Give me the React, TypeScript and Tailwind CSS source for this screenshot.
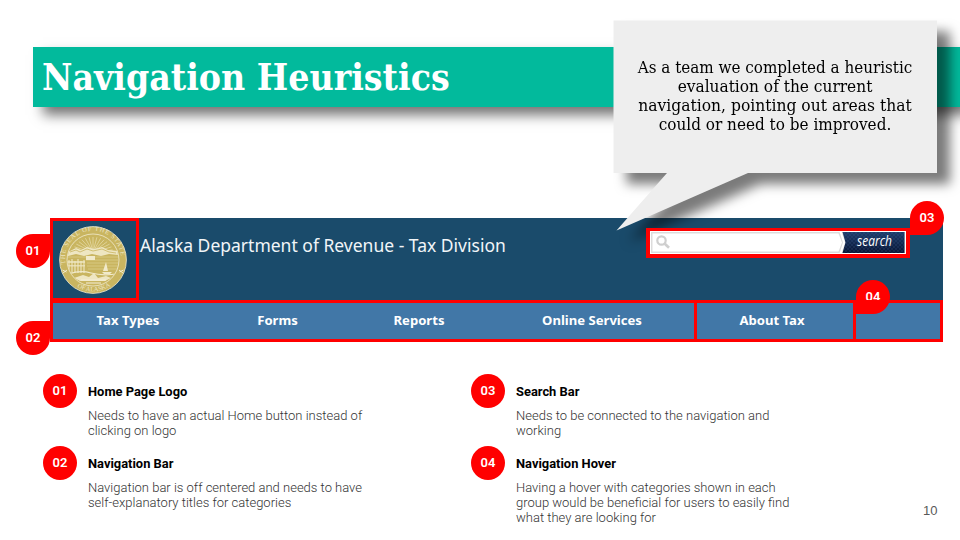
import React from "react";

const navLinks = [
  { label: "Tax Types", box: "ml-[42px] w-[66px]" },
  { label: "Forms", box: "ml-[95px] w-[43px]" },
  { label: "Reports", box: "ml-[93px] w-[54px]" },
  { label: "Online Services", box: "ml-[93px] w-[106px]" },
];

const leftFindings = [
  { num: "01", title: "Home Page Logo", lines: ["Needs to have an actual Home button instead of", "clicking on logo"] },
  { num: "02", title: "Navigation Bar", lines: ["Navigation bar is off centered and needs to have", "self-explanatory titles for categories"] },
];

const rightFindings = [
  { num: "03", title: "Search Bar", lines: ["Needs to be connected to the navigation and", "working"] },
  {
    num: "04",
    title: "Navigation Hover",
    lines: ["Having a hover with categories shown in each", "group would be beneficial for users to easily find", "what they are looking for"],
  },
];

const calloutLines = [
  { text: "As a team we completed a heuristic", stretch: "scale-x-[1.055]" },
  { text: "evaluation of the current", stretch: "scale-x-[1.07]" },
  { text: "navigation, pointing out areas that", stretch: "scale-x-[1.08]" },
  { text: "could or need to be improved.", stretch: "scale-x-[1.06]" },
];

function Pin({ num, className }: { num: string; className: string }) {
  return (
    <div
      className={`flex h-[34px] w-[34px] items-center justify-center bg-[#ff0000] font-['Roboto',sans-serif] text-[13px] font-semibold text-white ${className}`}
    >
      {num}
    </div>
  );
}

function Seal() {
  const rays = Array.from({ length: 15 }, (_, i) => {
    const a = (Math.PI * (i + 1)) / 16;
    return `M${34 - Math.cos(a) * 4} ${27 - Math.sin(a) * 4}L${34 - Math.cos(a) * 20} ${27 - Math.sin(a) * 16}`;
  }).join("");
  return (
    <svg viewBox="0 0 68 68" className="-ml-[3px] h-[68px] w-[68px]">
      <defs>
        <path id="sealTop" d="M6.5 38A28 28 0 1 1 61.5 38" />
        <path id="sealBottom" d="M14 58A31 31 0 0 0 54 58" />
        <clipPath id="sealInner">
          <circle cx="34" cy="34" r="25.5" />
        </clipPath>
      </defs>
      <circle cx="34" cy="34" r="33.4" fill="#c9b560" stroke="#f1ebcf" strokeWidth="0.8" />
      <g clipPath="url(#sealInner)">
        <path d={rays} stroke="#e9dfb0" strokeWidth="0.7" />
        <path d="M9 26l8-4 5 2 6-3 7 2 8-2 6 3 10 1v4l-9-1-8 2-9-2-8 2-8-2-8 2z" fill="#eee6c2" />
        <path d="M11 26l6-2 4 2 7-3 6 2 9-2 7 3 7 1" stroke="#c9b560" strokeWidth="0.8" fill="none" />
        <path d="M9 31h50M27 34h32M28 37h31M28 40h31M29 43h29" stroke="#ddd08f" strokeWidth="0.7" />
        <rect x="27" y="30" width="9" height="4" fill="#f1eacb" />
        <path d="M8 35h18v2H8zM9 39h17v1.5H9z" fill="#e5dba9" />
        <path d="M10 34v13M13 33v14M16 35v12M19 33v14M22 35v12M25 34v13" stroke="#eee6c2" strokeWidth="1.1" />
        <path d="M47 36l-3 9h5zM43 46h10l-2 2h-6z" fill="#f1eacb" />
        <path d="M10 48q11-4 22-1t26 1" stroke="#f1eacb" strokeWidth="1.2" fill="none" />
        <path d="M15 52l9-3 6 2 5-4 4 5 8-2 5 2-6 3H21z" fill="#eee6c2" />
        <path d="M22 54h25M27 57h15" stroke="#f5efd7" strokeWidth="1.2" />
      </g>
      <circle cx="34" cy="34" r="26" fill="none" stroke="#f1ebcf" strokeWidth="0.8" />
      <text fill="#eee6c4" className="font-['Liberation_Serif',serif] text-[6.5px]">
        <textPath href="#sealTop" textLength="90">
          THE SEAL OF THE STATE
        </textPath>
      </text>
      <text fill="#eee6c4" className="font-['Liberation_Serif',serif] text-[6.5px]">
        <textPath href="#sealBottom" startOffset="5" textLength="35">
          OF ALASKA
        </textPath>
      </text>
      <path d="M3.5 44l4 2M64.5 44l-4 2M4 47l4-3M64 47l-4-3" stroke="#f1ebcf" strokeWidth="1" />
    </svg>
  );
}

function SearchBox() {
  return (
    <div className="relative z-10 mt-[10px] flex h-[30px] w-[264px] border-4 border-t-[3px] border-[#ff0000] bg-white">
      <svg viewBox="0 0 256 23" className="h-[23px] w-[256px]">
        <defs>
          <linearGradient id="searchButton" x1="0" y1="0" x2="0" y2="1">
            <stop offset="0" stopColor="#1f3d6c" />
            <stop offset="1" stopColor="#081636" />
          </linearGradient>
          <pattern id="weave" width="4" height="4" patternUnits="userSpaceOnUse">
            <path d="M0 4l4-4M0 0l4 4" stroke="#4a6798" strokeWidth="0.5" opacity="0.35" />
          </pattern>
        </defs>
        <rect width="256" height="23" fill="#dcdcdc" />
        <path d="M2.500 2.500H188.500L192 11.500L188.500 20.500H2.500z" fill="#fff" />
        <path d="M192.500 1h62v21h-62l3-10.500z" fill="url(#searchButton)" />
        <path d="M192.500 1h62v21h-62l3-10.500z" fill="url(#weave)" />
        <path d="M190.500 .5l3.500 11-3.500 11" stroke="#fff" strokeWidth="2" fill="none" />
        <circle cx="11.500" cy="9.500" r="4.200" fill="none" stroke="#cfcfcf" strokeWidth="2.200" />
        <path d="M14.500 12.500l4.500 4.200" stroke="#cfcfcf" strokeWidth="2.700" />
        <path d="M0 .5h256M255.500 0v23M0 22.500h256M.5 0v23" stroke="#fff" />
        <text x="207" y="15" fill="#fff" textLength="35" lengthAdjust="spacingAndGlyphs" className="font-['Open_Sans',sans-serif] text-[14px] font-medium italic">
          search
        </text>
      </svg>
    </div>
  );
}

function Finding({ num, title, lines }: { num: string; title: string; lines: string[] }) {
  return (
    <article className="flex h-[72px] gap-[11px]">
      <Pin num={num} className="shrink-0 rounded-full" />
      <div className="whitespace-nowrap font-['Roboto',sans-serif]">
        <h2 className="mt-[10px] text-[12.9px] leading-[16px] font-bold text-black">{title}</h2>
        <p className="mt-[8px] text-[13px] leading-[15px] font-light text-[#333]">
          {lines.map((line) => (
            <span key={line} className="block">{line}</span>
          ))}
        </p>
      </div>
    </article>
  );
}

export default function App() {
  return (
    <main className="relative flex h-[540px] w-[960px] flex-col overflow-hidden bg-white">
      <header className="mt-[47px] ml-[33px] flex h-[60px] shrink-0 items-center bg-[#02ba9c] pl-[9px] shadow-[10px_8px_12px_rgba(0,0,0,0.55)]">
        <h1 className="whitespace-nowrap font-['DejaVu_Serif_Condensed','DejaVu_Serif',serif] text-[37px] leading-none font-bold text-white">
          Navigation Heuristics
        </h1>
      </header>

      <section className="mt-[111px] ml-[50px] flex h-[124px] w-[893px] shrink-0 flex-col bg-[#1a4b6b]">
        <div className="flex h-[82px]">
          <div className="flex h-[83px] w-[89px] shrink-0 justify-center border-3 border-[#ff0000] pt-[5px]">
            <Seal />
          </div>
          <p className="mt-[14px] ml-[1px] w-[456px] whitespace-nowrap font-['Noto_Sans',sans-serif] text-[17.500px] leading-[26px] text-[#f1f5f8]">
            Alaska Department of Revenue - Tax Division
          </p>
          <div className="ml-[50px]">
            <SearchBox />
          </div>
        </div>
        <nav className="flex h-[42px] border-3 border-[#ff0000] bg-[#4177a7] font-['Noto_Sans',sans-serif] text-[13.1px] leading-[34px] font-bold text-white">
          <div className="flex w-[641px] shrink-0">
            {navLinks.map((link) => (
              <a key={link.label} className={`flex justify-center whitespace-nowrap ${link.box}`}>{link.label}</a>
            ))}
          </div>
          <a className="w-[162px] border-x-3 border-[#ff0000] pr-[6px] text-center">About Tax</a>
        </nav>
      </section>

      <section className="mt-[32px] ml-[43px] flex">
        <div className="w-[428px]">
          {leftFindings.map((f) => (
            <Finding key={f.num} {...f} />
          ))}
        </div>
        <div>
          {rightFindings.map((f) => (
            <Finding key={f.num} {...f} />
          ))}
        </div>
      </section>

      <Pin num="01" className="absolute top-[234px] left-[16px] rounded-full rounded-tr-none" />
      <Pin num="02" className="absolute top-[321px] left-[16px] rounded-full rounded-tr-none" />
      <Pin num="03" className="absolute top-[201px] left-[910px] rounded-full rounded-bl-none" />
      <Pin num="04" className="absolute top-[280px] left-[856px] rounded-full rounded-bl-none" />
      <div className="absolute top-[300px] left-[860px] h-[3px] w-[26px] bg-[#ff0000]" />

      <aside className="absolute top-[20px] left-[613px] h-[211px] w-[324px]">
        <svg viewBox="0 0 324 211" className="absolute inset-0 h-[211px] w-[324px] overflow-visible drop-shadow-[13px_11px_6px_rgba(0,0,0,0.52)]">
          <path d="M.5.5H324V153H135L3.500 210.500L54 153H.5z" fill="#eeeeee" />
        </svg>
        <p className="relative pt-[38px] text-center font-['DejaVu_Serif_Condensed','DejaVu_Serif',serif] text-[16px] leading-[19px] text-black">
          {calloutLines.map((line) => (
            <span key={line.text} className={`block whitespace-nowrap ${line.stretch}`}>{line.text}</span>
          ))}
        </p>
      </aside>

      <span className="absolute top-[501px] left-[923px] font-['Liberation_Sans',sans-serif] text-[13px] leading-[20px] text-[#595959]">10</span>
    </main>
  );
}
